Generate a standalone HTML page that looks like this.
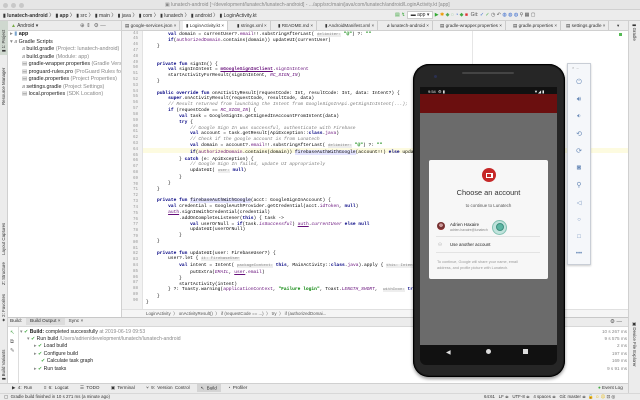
<!DOCTYPE html>
<html><head><meta charset="utf-8"><style>
*{margin:0;padding:0;box-sizing:border-box}
body{width:640px;height:400px;overflow:hidden;background:#fff;position:relative;font-family:"Liberation Sans",sans-serif;font-size:5px;color:#222}
.a{position:absolute;white-space:nowrap}
.code{position:absolute;left:146px;top:0;font-family:"Liberation Mono",monospace;font-size:4.6px;color:#000;white-space:pre;line-height:5.82px}
.ln{position:absolute;left:118px;width:16px;text-align:right;font-family:"Liberation Mono",monospace;font-size:4.2px;color:#999;line-height:5.82px;white-space:pre}
.k{color:#000080;font-weight:bold}.s{color:#008000;font-weight:bold}.c{color:#808080;font-style:italic}.p{color:#660e7a}.h{color:#888;background:#eee;font-size:4px}
.tab{position:absolute;top:21px;height:9px;border-right:1px solid #ccc;font-size:4.6px;padding:2px 3px;color:#333}
.pi{position:absolute;font-size:5.4px;color:#222;white-space:nowrap}
.g{color:#888}
.ti{position:absolute;left:579px;transform:translate(-50%,-50%);color:#6a8bb8;font-size:7px}
</style></head><body>
<!-- title bar -->
<div class="a" style="left:0;top:0;width:640px;height:10px;background:#e6e6e6;border-bottom:1px solid #d0d0d0"></div>
<div class="a" style="left:3px;top:2.5px;width:5px;height:5px;border-radius:50%;background:#c8c8c8"></div>
<div class="a" style="left:11px;top:2.5px;width:5px;height:5px;border-radius:50%;background:#c8c8c8"></div>
<div class="a" style="left:19px;top:2.5px;width:5px;height:5px;border-radius:50%;background:#c8c8c8"></div>
<div class="a" style="left:165px;top:2px;font-size:5px;color:#888">▣ lunatech-android [~/development/lunatech/lunatech-android] - .../app/src/main/java/com/lunatech/android/LoginActivity.kt [app]</div>
<!-- nav bar -->
<div class="a" style="left:0;top:10px;width:640px;height:11px;background:#ececec;border-bottom:1px solid #d0d0d0"></div>
<div class="a" style="left:3px;top:12px;font-size:5px;color:#333"><b>▮ lunatech-android</b> 〉 <b>▮ app</b> 〉 ▮ src 〉 ▮ main 〉 ▮ java 〉 ▮ com 〉 ▮ lunatech 〉 ▮ android 〉 ▮ LoginActivity.kt</div>
<div class="a" style="left:395px;top:12px;font-size:5px;color:#4a4">▤ ↯ <span style="background:#fff;border:1px solid #ccc;color:#333;padding:0 3px">▬ app ▾</span> <span style="color:#3a3">▶</span> <span style="color:#e90">✱</span> <span style="color:#5a5">◆</span> ◌ <span style="color:#36c">◔</span> ◆ <span style="color:#d33">■</span> &nbsp;<span style="color:#555">Git:</span> <span style="color:#36c">✓</span> ✓ <span style="color:#555">◷ ↶</span> <span style="color:#36c">◍ ◍ ◍</span> <span style="color:#555">⚲ ▦ ▢</span></div>
<!-- left strip -->
<div class="a" style="left:0;top:21px;width:8px;height:372px;background:#ececec;border-right:1px solid #d0d0d0"></div>
<div class="a" style="left:0;top:21px;width:8px;height:34px;background:#cfd8cf"></div>
<div class="a" style="left:1px;top:52px;transform:rotate(-90deg);transform-origin:0 0;font-size:4.4px;color:#333">▮ 1: Project</div>
<div class="a" style="left:1px;top:105px;transform:rotate(-90deg);transform-origin:0 0;font-size:4.4px;color:#333">Resource Manager</div>
<div class="a" style="left:1px;top:255px;transform:rotate(-90deg);transform-origin:0 0;font-size:4.4px;color:#333">Layout Captures</div>
<div class="a" style="left:1px;top:285px;transform:rotate(-90deg);transform-origin:0 0;font-size:4.4px;color:#333">Z: Structure</div>
<div class="a" style="left:1px;top:322px;transform:rotate(-90deg);transform-origin:0 0;font-size:4.4px;color:#333">★ 2: Favorites</div>
<div class="a" style="left:1px;top:380px;transform:rotate(-90deg);transform-origin:0 0;font-size:4.4px;color:#333">▮ Build Variants</div>
<!-- project panel -->
<div class="a" style="left:8px;top:21px;width:113px;height:10px;background:#ececec;border-bottom:1px solid #d5d5d5"></div>
<div class="a" style="left:11px;top:23px;font-size:5px;color:#333"><span style="color:#7a4">▲</span> Android ▾</div>
<div class="a" style="left:80px;top:22.5px;font-size:5.5px;color:#666">⊕ ⇕ &nbsp;⚙ —</div>
<div class="pi" style="left:10px;top:31px"><span class="g">▸</span> <span style="color:#7aa4cc">▮</span> <b>app</b></div>
<div class="pi" style="left:10px;top:38.5px"><span class="g">▾</span> <span class="g">𝑎</span> Gradle Scripts</div>
<div class="pi" style="left:22px;top:46px"><span class="g">𝑎</span> build.gradle <span class="g">(Project: lunatech-android)</span></div>
<div class="pi" style="left:22px;top:53.5px"><span class="g">𝑎</span> build.gradle <span class="g">(Module: app)</span></div>
<div class="pi" style="left:22px;top:61px"><span class="g">▤</span> gradle-wrapper.properties <span class="g">(Gradle Version)</span></div>
<div class="pi" style="left:22px;top:68.5px"><span class="g">▤</span> proguard-rules.pro <span class="g">(ProGuard Rules for app)</span></div>
<div class="pi" style="left:22px;top:76px"><span class="g">▤</span> gradle.properties <span class="g">(Project Properties)</span></div>
<div class="pi" style="left:22px;top:83.5px"><span class="g">𝑎</span> settings.gradle <span class="g">(Project Settings)</span></div>
<div class="pi" style="left:22px;top:91px"><span class="g">▤</span> local.properties <span class="g">(SDK Location)</span></div>
<div class="a" style="left:121px;top:21px;width:1px;height:296px;background:#d0d0d0"></div>
<!-- tabs -->
<div class="a" style="left:122px;top:21px;width:506px;height:10px;background:#ececec;border-bottom:1px solid #d0d0d0;overflow:hidden">
</div>
<div class="tab" style="left:122px">▤ google-services.json ×</div>
<div class="tab" style="left:183px;background:#fff">▮ LoginActivity.kt ×</div>
<div class="tab" style="left:234px">▮ strings.xml ×</div>
<div class="tab" style="left:275px">▮ README.md ×</div>
<div class="tab" style="left:322px">▮ AndroidManifest.xml ×</div>
<div class="tab" style="left:384px">𝑎 lunatech-android ×</div>
<div class="tab" style="left:437px">▤ gradle-wrapper.properties ×</div>
<div class="tab" style="left:510px">▤ gradle.properties ×</div>
<div class="tab" style="left:563px">▤ settings.gradle ×</div>
<div class="tab" style="left:614px;border:none">▾</div>
<!-- editor -->
<div class="a" style="left:122px;top:31px;width:21px;height:278px;background:#f2f2f2;border-right:1px solid #e2e2e2"></div>
<div class="a" style="left:472px;top:31px;width:1px;height:278px;background:#e6e6e6"></div>
<div class="a" style="left:143px;top:147.5px;width:485px;height:5.8px;background:#fdfbe0"></div>
<div class="a" style="left:122px;top:31px;width:506px;height:278px;overflow:hidden">
<div class="ln" style="left:0;top:0.5px">44
45
46
47
48
49
50
51
52
53
54
55
56
57
58
59
60
61
62
63
64
65
66
67
68
69
70
71
72
73
74
75
76
77
78
79
80
81
82
83
84
85
86
87
88
89
90</div>
<div class="code" style="left:24px;top:0.5px">        <span class="k">val</span> domain = currentUser?.<span class="p">email</span>!!.substringAfterLast( <span class="h">delimiter:</span> <span class="s">"@"</span>) ?: <span class="s">""</span>
        <span class="k">if</span>(<span class="p">authorizedDomain</span>.contains(domain)) updateUI(currentUser)
    }


    <span class="k">private fun</span> signIn() {
        <span class="k">val</span> signInIntent = <span class="p" style="font-weight:bold;text-decoration:underline">mGoogleSignInClient</span>.<span class="p">signInIntent</span>
        startActivityForResult(signInIntent, <span class="p" style="font-style:italic">RC_SIGN_IN</span>)
    }

    <span class="k">public override fun</span> onActivityResult(requestCode: Int, resultCode: Int, data: Intent?) {
        <span class="k">super</span>.onActivityResult(requestCode, resultCode, data)
        <span class="c">// Result returned from launching the Intent from GoogleSignInApi.getSignInIntent(...);</span>
        <span class="k">if</span> (requestCode == <span class="p" style="font-style:italic">RC_SIGN_IN</span>) {
            <span class="k">val</span> task = GoogleSignIn.getSignedInAccountFromIntent(data)
            <span class="k">try</span> {
                <span class="c">// Google Sign In was successful, authenticate with Firebase</span>
                <span class="k">val</span> account = task.getResult(ApiException::<span class="k">class</span>.<span class="p">java</span>)
                <span class="c">// Check if the google account is from Lunatech</span>
                <span class="k">val</span> domain = account?.<span class="p">email</span>!!.substringAfterLast( <span class="h">delimiter:</span> <span class="s">"@"</span>) ?: <span class="s">""</span>
                <span class="k">if</span>(<span class="p">authorizedDomain</span>.contains(domain)) <span style="background:#e4e4ff">firebaseAuthWithGoogle</span>(account!!) <span class="k">else</span> updateUI( <span class="h">user:</span> <span class="k">null</span>)
            } <span class="k">catch</span> (e: ApiException) {
                <span class="c">// Google Sign In failed, update UI appropriately</span>
                updateUI( <span class="h">user:</span> <span class="k">null</span>)
            }
        }
    }

    <span class="k">private fun</span> <span style="background:#e4e4ff">firebaseAuthWithGoogle</span>(acct: GoogleSignInAccount) {
        <span class="k">val</span> credential = GoogleAuthProvider.getCredential(acct.<span class="p">idToken</span>, <span class="k">null</span>)
        <span class="p" style="text-decoration:underline">auth</span>.signInWithCredential(credential)
            .addOnCompleteListener(<span class="k">this</span>) { task ->
                <span class="k">val</span> userOrNull = <span class="k">if</span>(task.<span class="p" style="font-style:italic">isSuccessful</span>) <span class="p" style="text-decoration:underline">auth</span>.<span class="p" style="font-style:italic">currentUser</span> <span class="k">else null</span>
                updateUI(userOrNull)
            }
    }

    <span class="k">private fun</span> updateUI(user: FirebaseUser?) {
        user?.let { <span class="h">it: FirebaseUser</span>
            <span class="k">val</span> intent = Intent( <span class="h">packageContext:</span> <span class="k">this</span>, MainActivity::<span class="k">class</span>.<span class="p">java</span>).apply { <span class="h">this: Intent</span>
                putExtra(<span class="p" style="font-style:italic">EMAIL</span>, <span class="p" style="text-decoration:underline">user</span>.<span class="p">email</span>)
            }
            startActivity(intent)
        } ?: Toasty.warning(<span class="p">applicationContext</span>, <span class="s">"Failure login"</span>, Toast.<span class="p" style="font-style:italic">LENGTH_SHORT</span>,  <span class="h">withIcon:</span> <span class="k">true</span>).show()
    }
}
</div>
</div>
<!-- editor breadcrumb -->
<div class="a" style="left:122px;top:309px;width:506px;height:8px;background:#f5f5f5;border-top:1px solid #e0e0e0"></div>
<div class="a" style="left:146px;top:310.5px;font-size:4.4px;color:#555">LoginActivity &nbsp;〉 onActivityResult() &nbsp;〉 if (requestCode == ...) &nbsp;〉 try &nbsp;〉 if (authorizedDomai...</div>
<!-- right strip -->
<div class="a" style="left:628px;top:21px;width:12px;height:372px;background:#ececec;border-left:1px solid #d0d0d0"></div>
<div class="a" style="left:637px;top:24px;transform:rotate(90deg);transform-origin:0 0;font-size:4.4px;color:#333">▮ Gradle</div>
<div class="a" style="left:637px;top:322px;transform:rotate(90deg);transform-origin:0 0;font-size:4.4px;color:#333">▣ Device File Explorer</div>
<div class="a" style="left:619px;top:33px;width:3px;height:3px;background:#5b5"></div>
<!-- build panel -->
<div class="a" style="left:8px;top:317px;width:620px;height:10px;background:#ececec;border-top:1px solid #c8c8c8;border-bottom:1px solid #d8d8d8"></div>
<div class="a" style="left:10px;top:319px;font-size:4.8px;color:#333">Build: &nbsp;&nbsp;<span style="background:#dcdcdc;padding:1px 4px">Build Output ×</span> &nbsp;&nbsp;Sync ×</div>
<div class="a" style="left:610px;top:318.5px;font-size:5.5px;color:#555">⚙ —</div>
<div class="a" style="left:8px;top:327px;width:11px;height:56px;border-right:1px solid #ddd"></div>
<div class="a" style="left:10px;top:329px;font-size:5.5px;color:#5a5;line-height:9px">↖<br><span style="color:#777">⧉</span><br><span style="color:#777">✎</span></div>
<div class="a" style="left:20px;top:328.5px;font-size:5.1px;line-height:7.4px;color:#222">
<div><span class="g">▾</span> <span style="color:#4a4">✔</span> <b>Build:</b> completed successfully <span class="g">at 2019-06-19 09:53</span></div>
<div style="padding-left:7px"><span class="g">▾</span> <span style="color:#4a4">✔</span> Run build <span class="g">/Users/adrien/development/lunatech/lunatech-android</span></div>
<div style="padding-left:14px"><span class="g">▸</span> <span style="color:#4a4">✔</span> Load build</div>
<div style="padding-left:14px"><span class="g">▸</span> <span style="color:#4a4">✔</span> Configure build</div>
<div style="padding-left:21px"><span style="color:#4a4">✔</span> Calculate task graph</div>
<div style="padding-left:14px"><span class="g">▸</span> <span style="color:#4a4">✔</span> Run tasks</div>
</div>
<div class="a" style="left:590px;top:327.5px;width:37px;text-align:right;font-size:4.6px;line-height:7.4px;color:#888">10 s 267 ms<br>9 s 575 ms<br>2 ms<br>197 ms<br>169 ms<br>9 s 91 ms</div>
<!-- tool window bar -->
<div class="a" style="left:0;top:383px;width:628px;height:10px;background:#ececec;border-top:1px solid #d0d0d0"></div>
<div class="a" style="left:12px;top:385px;font-size:4.6px;color:#333;word-spacing:1px">▶ 4: Run &nbsp;&nbsp;&nbsp; ≡ 6: Logcat &nbsp;&nbsp;&nbsp; ☰ TODO &nbsp;&nbsp;&nbsp; ▣ Terminal &nbsp;&nbsp;&nbsp; ⑂ 9: Version Control &nbsp;&nbsp;<span style="background:#d4d4d4;padding:1.5px 4px">↖ Build</span> &nbsp; ◔ Profiler</div>
<div class="a" style="left:598px;top:385px;font-size:4.6px;color:#333"><span style="color:#4a4">●</span> Event Log</div>
<!-- status bar -->
<div class="a" style="left:0;top:393px;width:640px;height:7px;background:#ececec;border-top:1px solid #d8d8d8"></div>
<div class="a" style="left:4px;top:394px;font-size:4.4px;color:#333">▢ &nbsp;Gradle build finished in 10 s 271 ms (a minute ago)</div>
<div class="a" style="left:484px;top:394px;font-size:4.4px;color:#333">64:61 &nbsp; LF ≑ &nbsp; UTF-8 ≑ &nbsp; 4 spaces ≑ &nbsp; Git: master ≑ &nbsp;🔓 <span style="color:#e9b800">☺ ☹</span> ⊡ ◎</div>
<!-- emulator -->
<div class="a" style="left:413px;top:64px;width:152px;height:313px;border-radius:16px;background:#1c1c1c;box-shadow:0 0 0 1px #000 inset, 0 2px 3px rgba(0,0,0,.4)"></div>
<div class="a" style="left:415px;top:66px;width:148px;height:309px;border-radius:14px;background:#262626"></div>
<div class="a" style="left:462px;top:72px;width:52px;height:2px;border-radius:1px;background:#444"></div>
<div class="a" style="left:434px;top:75px;width:3px;height:3px;border-radius:50%;background:#2a3050"></div>
<div class="a" style="left:420px;top:87px;width:137px;height:278px;background:#111;border-radius:0 0 6px 6px"></div>
<div class="a" style="left:428px;top:88.5px;font-size:4px;color:#eee">9:54 &nbsp;⚙ ▮</div>
<div class="a" style="left:534px;top:88.5px;font-size:4px;color:#eee">▼◢ ▮</div>
<div class="a" style="left:420px;top:94px;width:137px;height:19px;background:#6b0f0f"></div>
<div class="a" style="left:420px;top:113px;width:137px;height:232px;background:#6b6b6b"></div>
<div class="a" style="left:446px;top:349px;font-size:6px;color:#ddd">◀</div>
<div class="a" style="left:486px;top:348.5px;width:5px;height:5px;border-radius:50%;background:#ddd"></div>
<div class="a" style="left:523px;top:348.5px;width:5px;height:5px;background:#ddd"></div>
<!-- dialog -->
<div class="a" style="left:429px;top:160px;width:119px;height:119px;background:#f7f7f7;border-radius:2px"></div>
<div class="a" style="left:482px;top:168px;width:14px;height:14px;border-radius:50%;background:#c62828"></div>
<div class="a" style="left:485.5px;top:172.5px;width:7px;height:5px;border:1.3px solid #fff;border-right-width:2.5px"></div>
<div class="a" style="left:429px;top:188px;width:119px;text-align:center;font-size:7.4px;color:#333">Choose an account</div>
<div class="a" style="left:429px;top:203px;width:119px;text-align:center;font-size:4.4px;color:#555">to continue to Lunatech</div>
<div class="a" style="left:437px;top:222px;width:8px;height:8px;border-radius:50%;background:radial-gradient(circle at 50% 40%,#c99 0 30%,#733 31% 70%,#b33 71%)"></div>
<div class="a" style="left:450px;top:221.5px;font-size:4.4px;color:#222">Adrien Haxaire</div>
<div class="a" style="left:450px;top:227.5px;font-size:3.4px;color:#888">adrien.haxaire@lunatech</div>
<div class="a" style="left:492px;top:219.5px;width:15px;height:15px;border-radius:50%;background:rgba(90,190,170,.35);border:1px solid rgba(90,170,150,.6)"></div>
<div class="a" style="left:495.5px;top:223px;width:8px;height:8px;border-radius:50%;background:#5bb5a2;border:1px solid #3d8f7e"></div>
<div class="a" style="left:436px;top:236px;width:104px;height:1px;background:#e3e3e3"></div>
<div class="a" style="left:438px;top:242px;font-size:4.6px;color:#888">⚇</div>
<div class="a" style="left:450px;top:242px;font-size:4.4px;color:#222">Use another account</div>
<div class="a" style="left:436px;top:252px;width:104px;height:1px;background:#e3e3e3"></div>
<div class="a" style="left:437px;top:259px;font-size:3.8px;line-height:6px;color:#999">To continue, Google will share your name, email<br>address, and profile picture with Lunatech.</div>
<!-- emulator toolbar -->
<div class="a" style="left:567px;top:63px;width:24px;height:202px;background:#f5f7fa;border:1px solid #c9ced6;box-shadow:0 1px 2px rgba(0,0,0,.2)"></div>
<div class="a" style="left:572px;top:64.5px;font-size:4px;color:#999">× &nbsp;–</div>
<div class="ti" style="top:83px">⏻</div>
<div class="ti" style="top:100px">🔊︎</div>
<div class="ti" style="top:117px;font-size:6px">🔉︎</div>
<div class="ti" style="top:134px">⟲</div>
<div class="ti" style="top:151px">⟳</div>
<div class="ti" style="top:168px">◙</div>
<div class="ti" style="top:185px">⚲</div>
<div class="ti" style="top:203px;font-size:6px">◁</div>
<div class="ti" style="top:220px;font-size:6px">○</div>
<div class="ti" style="top:237px;font-size:6px">□</div>
<div class="ti" style="top:254px;font-size:6px">•••</div>
</body></html>
